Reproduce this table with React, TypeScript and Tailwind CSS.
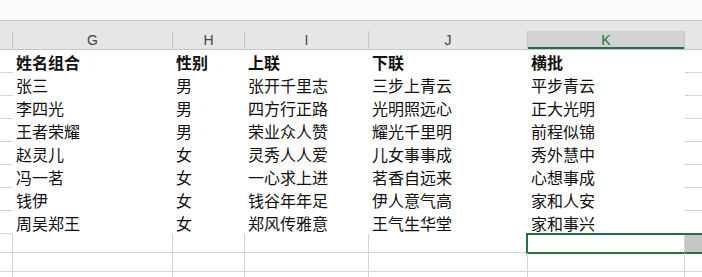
import React from 'react';

const COLS = ['G', 'H', 'I', 'J', 'K'];
// widths include the 1px right gridline
const WIDTHS = ['w-[160px]', 'w-[72px]', 'w-[124px]', 'w-[159px]', 'w-[157px]'];

const HEADER = ['姓名组合', '性别', '上联', '下联', '横批'];

const ROWS: string[][] = [
    ['张三', '男', '张开千里志', '三步上青云', '平步青云'],
    ['李四光', '男', '四方行正路', '光明照远心', '正大光明'],
    ['王者荣耀', '男', '荣业众人赞', '耀光千里明', '前程似锦'],
    ['赵灵儿', '女', '灵秀人人爱', '儿女事事成', '秀外慧中'],
    ['冯一茗', '女', '一心求上进', '茗香自远来', '心想事成'],
    ['钱伊', '女', '钱谷年年足', '伊人意气高', '家和人安'],
    ['周吴郑王', '女', '郑风传雅意', '王气生华堂', '家和事兴'],
];

const font = { fontFamily: '"Noto Sans CJK SC", "Microsoft YaHei", sans-serif' };

function ColumnHeader() {
    return (
        <div className="flex h-[19px] bg-[#e6e6e6] border-b border-[#c6c6c6]">
            <div className="w-[13px] shrink-0 border-r border-[#c6c6c6]" />
            {COLS.map((c, i) => {
                const active = c === 'K';
                return (
                    <div
                        key={c}
                        className={`${WIDTHS[i]} shrink-0 flex items-center justify-center border-r border-[#c6c6c6] text-[14px] leading-none ${active ? 'bg-[#d2d2d2] text-[#217346] shadow-[inset_0_-2px_0_#217346]' : 'text-[#444]'}`}
                        style={{ fontFamily: '"Liberation Sans", Arial, sans-serif' }}
                    >
                        {c}
                    </div>
                );
            })}
            <div className="flex-1" />
        </div>
    );
}

function DataRow({ cells, bold }: { cells: string[]; bold?: boolean }) {
    return (
        <div className="flex h-[23px]">
            <div className="w-[13px] shrink-0 border-b border-[#d4d4d4]" />
            {cells.map((t, i) => (
                <div
                    key={i}
                    className={`${WIDTHS[i]} shrink-0 flex items-center pl-[3px] text-[16px] leading-none text-[#111] bg-white ${bold ? 'font-bold' : ''}`}
                >
                    {t}
                </div>
            ))}
            <div className="flex-1 border-b border-[#d4d4d4]" />
        </div>
    );
}

function EmptyRow({ selected }: { selected?: boolean }) {
    return (
        <div className="relative flex h-[19px]">
            <div className="w-[13px] shrink-0 border-r border-b border-[#d4d4d4]" />
            {WIDTHS.map((w, i) => (
                <div key={i} className={`${w} shrink-0 border-r border-b border-[#d4d4d4]`} />
            ))}
            <div className={`flex-1 border-b border-[#d4d4d4] ${selected ? 'bg-[#c6c6c6]' : ''}`} />
            {selected && (
                <div className="absolute left-[526px] -right-[4px] -top-[1px] h-[21px] border-2 border-[#217346]" />
            )}
        </div>
    );
}

export default function App() {
    return (
        <div className="w-[702px] h-[277px] overflow-hidden bg-white" style={font}>
            <div className="h-[21px] bg-[#fbfbfb] border-b border-[#c8c8c8]" />
            <div className="h-[10px] bg-[#e6e6e6]" />
            <ColumnHeader />
            <DataRow cells={HEADER} bold />
            {ROWS.map((r, i) => (
                <DataRow key={i} cells={r} />
            ))}
            <EmptyRow selected />
            <EmptyRow />
            <EmptyRow />
        </div>
    );
}
